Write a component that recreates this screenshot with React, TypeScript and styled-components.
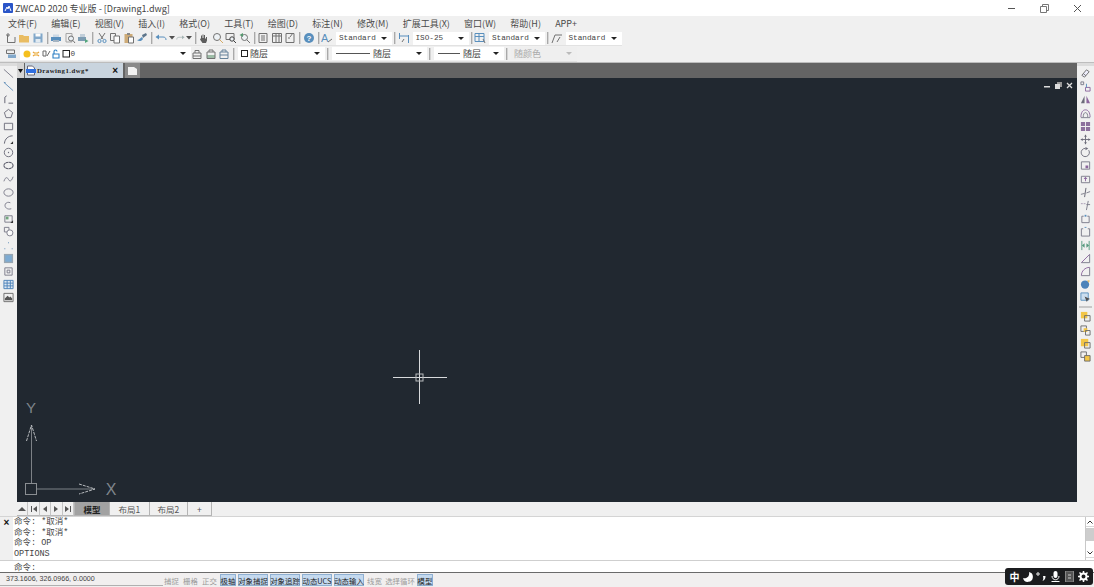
import React from 'react';
import styled, { createGlobalStyle } from 'styled-components';

const UI_FONT = `"Noto Sans CJK SC", "Liberation Sans", sans-serif`;
const MONO_FONT = `"Liberation Mono", "Noto Sans CJK SC", monospace`;

const GlobalStyle = createGlobalStyle`
  html, body {
    margin: 0;
    padding: 0;
    background: #f0f0f0;
  }
  * {
    box-sizing: border-box;
  }
`;

const Page = styled.div`
  width: 1094px;
  height: 587px;
  display: flex;
  flex-direction: column;
  overflow: hidden;
  position: relative;
  background: #f0f0f0;
  font-family: ${UI_FONT};
  color: #333;
`;

/* title bar */
const TitleBar = styled.div`
  height: 16px;
  flex: none;
  background: #fff;
  display: flex;
  align-items: center;
  padding-left: 3px;
`;

const TitleText = styled.span`
  font-size: 9px;
  color: #444;
  margin-left: 2px;
  white-space: nowrap;
`;

const WindowButtons = styled.div`
  margin-left: auto;
  display: flex;
  align-items: center;
  padding-right: 12px;
  gap: 24px;
`;

/* menu */
const MenuBar = styled.div`
  height: 15px;
  flex: none;
  display: flex;
  align-items: center;
  gap: 14.2px;
  padding-left: 8px;
`;

const MenuItem = styled.span`
  font-size: 9px;
  color: #4a4a4a;
  white-space: nowrap;
`;

/* toolbars */
const ToolRow = styled.div<{ $height: number }>`
  height: ${p => p.$height}px;
  flex: none;
  display: flex;
  align-items: center;
  width: fit-content;
  padding-left: 4px;
  border-bottom: 1px solid #e2e2e2;
`;

const Cell = styled.span<{ $w?: number }>`
  width: ${p => p.$w ?? 13.5}px;
  height: 13px;
  flex: none;
  display: inline-flex;
  align-items: center;
  justify-content: center;
  opacity: 0.85;
`;

const Sep = styled.span`
  width: 2px;
  height: 12px;
  flex: none;
  margin: 0 1px 0 2px;
  background: #a9a9a9;
  border-right: 1px solid #d5d5d5;
`;

const Combo = styled.div<{ $w: number; $off?: boolean }>`
  width: ${p => p.$w}px;
  height: 13px;
  flex: none;
  margin-left: 2px;
  background: ${p => (p.$off ? '#efefef' : '#fff')};
  color: ${p => (p.$off ? '#aaa' : '#444')};
  display: flex;
  align-items: center;
  padding: 0 5px 0 3px;
  font-size: 9px;
  white-space: nowrap;
`;

const ComboMono = styled.span`
  font-family: ${MONO_FONT};
  font-size: 7.7px;
  color: #444;
`;

const Caret = styled.span<{ $off?: boolean }>`
  margin-left: auto;
  width: 0;
  height: 0;
  border-left: 3px solid transparent;
  border-right: 3px solid transparent;
  border-top: 3px solid ${p => (p.$off ? '#bbb' : '#222')};
`;

const LineSample = styled.span<{ $w: number }>`
  width: ${p => p.$w}px;
  height: 1px;
  background: #555;
  margin: 0 3px 0 1px;
`;

const ColorSquare = styled.span`
  width: 7px;
  height: 7px;
  border: 1px solid #222;
  margin: 0 2px 0 0;
`;

/* work area */
const Workspace = styled.div`
  flex: 1;
  min-height: 0;
  display: grid;
  grid-template-columns: 17px minmax(0, 1fr) 17px;
  grid-template-rows: minmax(0, 1fr);
  border-top: 1px solid #bdbdbd;
`;

const SideBar = styled.div`
  display: flex;
  flex-direction: column;
  align-items: center;
  padding-top: 1px;
  border-top: 3px solid #dcdcdc;
  background: #f0f0f0;
`;

const SideCell = styled.span`
  height: 13.2px;
  width: 14px;
  flex: none;
  display: flex;
  align-items: center;
  justify-content: center;
  opacity: 0.85;
`;

const SideDivider = styled.span`
  width: 13px;
  height: 2px;
  flex: none;
  margin: 2px 0 2px;
  background: #c8c8c8;
`;

const Center = styled.div`
  display: flex;
  flex-direction: column;
  min-width: 0;
  min-height: 0;
`;

const DocStrip = styled.div`
  height: 15px;
  flex: none;
  background: #646464;
  display: flex;
  align-items: stretch;
`;

const DocMenu = styled.span`
  width: 7px;
  background: #d4d4d4;
  display: flex;
  align-items: center;
  justify-content: center;
`;

const DocTab = styled.div`
  width: 98px;
  margin-left: 1px;
  background: #c9d4de;
  display: flex;
  align-items: center;
  padding: 0 5px 0 1px;
`;

const DocName = styled.span`
  font-family: "Liberation Serif", serif;
  font-weight: 700;
  font-size: 6.8px;
  letter-spacing: 0.45px;
  color: #222;
  margin-left: 1px;
`;

const DocClose = styled.span`
  margin-left: auto;
  font-family: "Liberation Sans", sans-serif;
  font-weight: 700;
  font-size: 10px;
  line-height: 1;
  color: #111;
`;

const NewTab = styled.span`
  width: 15px;
  margin-left: 2px;
  background: #8a8a8a;
  display: flex;
  align-items: center;
  justify-content: center;
`;

const Canvas = styled.div`
  flex: 1;
  min-height: 0;
  background: #212830;
  position: relative;
`;

const ViewControls = styled.div`
  position: absolute;
  top: 4px;
  right: 4px;
  display: flex;
  gap: 4px;
  align-items: center;
`;

const Crosshair = styled.svg`
  position: absolute;
  left: 375px;
  top: 271px;
`;

const UcsIcon = styled.svg`
  position: absolute;
  left: 0;
  bottom: 0;
`;

const LayoutTabs = styled.div`
  height: 14px;
  flex: none;
  background: #f0f0f0;
  display: flex;
  align-items: stretch;
`;

const NavButton = styled.span`
  width: 11.4px;
  flex: none;
  display: flex;
  align-items: center;
  justify-content: center;
  border-right: 1px solid #c4c4c4;
  border-bottom: 1px solid #b8b8b8;
`;

const LayoutTab = styled.span<{ $w: number; $active?: boolean }>`
  width: ${p => p.$w}px;
  flex: none;
  display: flex;
  align-items: center;
  justify-content: center;
  font-size: 8.5px;
  font-weight: ${p => (p.$active ? 700 : 400)};
  color: ${p => (p.$active ? '#222' : '#555')};
  background: ${p => (p.$active ? '#a2a2a2' : '#f0f0f0')};
  border-right: 1px solid #b4b4b4;
  border-bottom: 1px solid #b4b4b4;
`;

/* command window */
const CommandArea = styled.div`
  flex: none;
  display: flex;
  flex-direction: column;
  border-top: 1px solid #d4d4d4;
`;

const History = styled.div`
  height: 43px;
  display: flex;
`;

const CommandGrip = styled.div`
  width: 13px;
  flex: none;
  background: #f0f0f0;
  display: flex;
  justify-content: center;
  font-family: "Liberation Sans", sans-serif;
  font-size: 10px;
  font-weight: 700;
  line-height: 11px;
  color: #111;
`;

const HistoryText = styled.div`
  flex: 1;
  background: #fff;
  padding: 0 0 0 1px;
  overflow: hidden;
`;

const CommandLine = styled.div`
  height: 10.5px;
  line-height: 10.5px;
  font-family: ${MONO_FONT};
  font-size: 8.5px;
  color: #444;
  white-space: nowrap;
`;

const Scrollbar = styled.div`
  width: 9px;
  flex: none;
  display: flex;
  flex-direction: column;
  background: #fff;
  border-left: 1px solid #c8c8c8;
`;

const ScrollArrow = styled.span`
  height: 10px;
  flex: none;
  background: #fff;
  display: flex;
  align-items: center;
  justify-content: center;
  border-bottom: 1px solid #d8d8d8;
`;

const ScrollThumb = styled.span`
  height: 13px;
  flex: none;
  margin: 1px 0 7px;
  background: #cdcdcd;
`;

const InputRow = styled.div`
  height: 13px;
  background: #fff;
  padding-left: 14px;
  display: flex;
  align-items: center;
  border-top: 1px solid #cfcfcf;
  border-bottom: 1px solid #6a6a6a;
  font-family: ${MONO_FONT};
  font-size: 8.5px;
  color: #444;
`;

/* status bar */
const StatusBar = styled.div`
  height: 14px;
  flex: none;
  display: flex;
  align-items: center;
  background: #f1efef;
`;

const Coords = styled.div`
  width: 163px;
  height: 12px;
  padding-left: 6px;
  font-family: "Liberation Sans", sans-serif;
  font-size: 7.1px;
  line-height: 11px;
  color: #444;
  border-bottom: 1px solid #b0b0b0;
`;

const Toggle = styled.span<{ $w: number; $on?: boolean; $gap?: number }>`
  width: ${p => p.$w}px;
  height: 12px;
  flex: none;
  margin-right: ${p => p.$gap ?? 2}px;
  display: flex;
  align-items: center;
  justify-content: center;
  font-size: 7.4px;
  white-space: nowrap;
  color: ${p => (p.$on ? '#222' : '#9a9a9a')};
  background: ${p => (p.$on ? '#c4d9ef' : 'transparent')};
  border: 1px solid ${p => (p.$on ? '#8fb0d2' : 'transparent')};
`;

/* input method floating bar */
const ImeBar = styled.div`
  position: absolute;
  right: 1px;
  bottom: 2px;
  width: 88px;
  height: 17px;
  background: #1b1c1e;
  border-radius: 3px;
  display: flex;
  align-items: center;
  justify-content: space-around;
  padding: 0 3px;
  color: #fff;
  font-size: 10px;
  font-weight: 700;
`;

const stroke = (d: string, c = '#555') => <path d={d} fill="none" stroke={c} strokeWidth="1" />;
const fill = (d: string, c: string) => <path d={d} fill={c} />;

const Icon: React.FC<{ size?: number; children: React.ReactNode }> = ({ size = 12, children }) => (
  <svg width={size} height={size} viewBox="0 0 12 12">
    {children}
  </svg>
);

const BLUE = '#3f7fb5';
const GREY = '#5c5c5c';
const ORANGE = '#e8b34a';
const PURPLE = '#7b4f8f';

const topIcons: Record<string, React.ReactNode> = {
  new: <>{stroke('M2.5 3v7.5h7.5V5', GREY)}{stroke('M1 3h4M3 1v4', GREY)}</>,
  open: <>{fill('M1 3h4l1 1h5v6.5H1z', ORANGE)}</>,
  save: <>{fill('M1.5 1.5h9v9h-9z', '#6f9cc4')}{fill('M3.5 1.5h5v3h-5z', '#fff')}{fill('M3.5 7h5v3.5h-5z', '#dfe9f2')}</>,
  print: <>{fill('M1 5h10v4H1z', BLUE)}{fill('M3 2.5h6V5H3z', '#c6d6e4')}{fill('M3 8h6v2H3z', '#9ab')}</>,
  preview: <>{stroke('M2 1.5h6v8.5H2z', '#999')}<circle cx="7" cy="6.5" r="2.5" fill="#e8eff5" stroke={GREY} />{stroke('M9 8.5l2 2.5', GREY)}</>,
  publish: <>{fill('M1 5h8v4H1z', '#6a8ea8')}{fill('M3 2h5v3H3z', '#b9c9d6')}{fill('M8 7l3.5 2-3.5 2z', '#3a9a6a')}</>,
  cut: <>{stroke('M3 1l4 6M9 1L5 7', GREY)}<circle cx="3.5" cy="9" r="1.6" fill="none" stroke={BLUE} /><circle cx="8.5" cy="9" r="1.6" fill="none" stroke={BLUE} /></>,
  copy: <>{stroke('M1.5 1.5h5v7h-5z', GREY)}<path d="M5 4h5.5v7H5z" fill="#fff" stroke={GREY} /></>,
  paste: <>{fill('M1.5 2h8v9h-8z', '#c9a063')}{fill('M4 1h3v2H4z', '#777')}<path d="M5.5 5h5v6h-5z" fill="#fff" stroke={GREY} /></>,
  match: <>{fill('M6 3l4-2 1 2-4 3z', '#44607a')}{fill('M1 8c2 0 3-2 5-3l1 2c-1 2-4 3-6 1z', BLUE)}</>,
  undo: <>{stroke('M3 5h5c2 0 3 1 3 3', BLUE)}{fill('M0.5 5L4 2.5v5z', BLUE)}</>,
  redo: <>{stroke('M9 5H4C2 5 1 6 1 8', '#9aa')}{fill('M11.5 5L8 2.5v5z', '#9aa')}</>,
  pan: <>{fill('M3 6V3.5h1V6h.5V2.5h1V6H6V3h1v3.5h1V5h1v3.5L8 11H4.5L2 7.5z', '#444')}</>,
  zoom: <><circle cx="5" cy="5" r="3.5" fill="#eef3f7" stroke={GREY} />{stroke('M7.5 7.5l3.5 3.5', '#d1a050')}</>,
  zoomWin: <>{stroke('M1 1.5h8v6H1z', GREY)}<circle cx="7" cy="7" r="2.2" fill="#eef3f7" stroke="#222" />{stroke('M8.5 8.5l2.5 2.5', '#222')}</>,
  zoomPrev: <><circle cx="5.5" cy="5.5" r="3" fill="#eef3f7" stroke={GREY} />{stroke('M8 8l3 3', GREY)}{fill('M0.5 3L4 1v4z', '#3a8a5a')}</>,
  props: <>{stroke('M2 1.5h8v9H2z', GREY)}{stroke('M4 4h4M4 6h4M4 8h4', GREY)}</>,
  design: <>{stroke('M1.5 1.5h9v9h-9zM1.5 4h9M5 1.5v9M8 1.5v9', GREY)}</>,
  tool: <>{stroke('M2 1.5h8v9H2z', GREY)}{stroke('M4 6h2M9 1l-3 4', GREY)}</>,
  help: <><circle cx="6" cy="6" r="5" fill="#3f7fb5" /><text x="6" y="9" fontSize="8" fontWeight="700" textAnchor="middle" fill="#fff" fontFamily="Liberation Sans">?</text></>,
  textStyle: <><text x="0" y="10" fontSize="11" fill={BLUE} fontFamily="Liberation Sans">A</text>{stroke('M7 10l4-3', GREY)}</>,
  dimStyle: <>{stroke('M1.5 1v6M10.5 3v8M1.5 4h9', BLUE)}{stroke('M4 10l2-3', GREY)}</>,
  tableStyle: <>{stroke('M1 1.5h9v8H1zM1 4.5h9M5 1.5v8', BLUE)}{stroke('M9 7l2 4', GREY)}</>,
  leader: <>{stroke('M1 11l3-8h7', GREY)}{stroke('M9 5l-3 5', GREY)}</>,
  layer: <>{stroke('M1.5 2h8v3.5h-8z', GREY)}{fill('M3 6.5h8V10H3z', '#6f9cc4')}</>,
  layerA: <>{stroke('M2 5h8v5.5H2z', GREY)}{stroke('M4 5V2.5h4V5', GREY)}{stroke('M2 8h8', GREY)}</>,
  layerB: <>{fill('M2 7h8v3.5H2z', '#8fb49a')}{stroke('M2 4h8v6.5H2zM4 4V2h4v2', GREY)}</>,
  layerC: <>{stroke('M2 4h8v6.5H2zM2 7h8M4 4V2h4v2', '#50708c')}</>,
};

const leftIcons: React.ReactNode[] = [
  stroke('M1 1.5l10 9', '#667'),
  stroke('M1 1.5l10 9M1 1.5l2 .5', '#4a7fb0'),
  stroke('M2 10V3.5L4 2M6 10h5', '#445'),
  stroke('M6 1.5l4.5 3.5-1.8 5.5H3.3L1.5 5z', '#556'),
  stroke('M1.5 2.5h9v7h-9z', '#556'),
  <>{stroke('M1.5 10.5C2 5 6 2 10.5 2', '#445')}{fill('M8 11l3-3v3z', '#111')}</>,
  <><circle cx="6" cy="6" r="4.6" fill="none" stroke="#556" /><circle cx="6" cy="6" r=".7" fill="#556" /></>,
  <ellipse cx="6" cy="6" rx="5" ry="3.6" fill="none" stroke="#445" strokeWidth="1.2" strokeDasharray="3 .4" />,
  stroke('M1 8c2-6 4-4 5-2s3 3 5-3', '#667'),
  <ellipse cx="6" cy="6" rx="5" ry="4" fill="none" stroke="#667" />,
  stroke('M9 9.5C5 11 1 8 2.5 4.5 3.5 2.5 6 2 8 3', '#667'),
  <>{stroke('M2 3h8v7H2z', '#667')}{fill('M3 4h3v3H3z', '#5c9a6a')}{fill('M8 11l3-3v3z', '#111')}</>,
  <>{stroke('M1.5 1.5h5v5h-5z', '#667')}<circle cx="7.5" cy="7.5" r="3.3" fill="#fff" stroke="#667" /></>,
  <>{fill('M5.5 2.5h1v1h-1z', '#4a7fb0')}{fill('M1.5 9h1v1h-1z', '#4a7fb0')}{fill('M9.5 9h1v1h-1z', '#4a7fb0')}</>,
  <>{fill('M1 1h10v10H1z', '#8a9aa8')}{fill('M2.5 2.5h7v7h-7z', '#6aa0cf')}</>,
  <>{stroke('M2 2h8v8H2z', '#667')}{stroke('M4.5 4.5h3v3h-3z', '#667')}</>,
  <>{fill('M1 1.5h10v9H1z', '#dbe7f2')}{stroke('M1 1.5h10v9H1zM1 4.5h10M1 7.5h10M4.5 1.5v9M8 1.5v9', '#2f6fb0')}</>,
  <>{stroke('M1 1.5h10v9H1z', '#555')}{fill('M2 7l3-3 2 2 1-1 2 2v2H2z', '#3a3a3a')}</>,
];

const rightIcons: React.ReactNode[] = [
  <>{fill('M2 8l5-6 3 2-5 6z', '#eef')}{stroke('M2 8l5-6 3 2-5 6zM3.5 6l3 2.5', '#555')}</>,
  <>{stroke('M1 1h3v3H1z', '#667')}{stroke('M6 7h5v4H6z', PURPLE)}{fill('M6.5 3h1v4h-1z', BLUE)}</>,
  <>{fill('M5 2v8H1z', '#556')}{fill('M7 2v8h4z', PURPLE)}</>,
  <>{stroke('M1 10c0-5 2-8 5-8s5 3 5 8', PURPLE)}{stroke('M3.5 10c0-3 1-5 2.5-5s2.5 2 2.5 5', '#667')}{stroke('M1 10.5h10', '#667')}</>,
  <>{fill('M1 1h4.5v4.5H1zM6.5 1H11v4.5H6.5zM1 6.5h4.5V11H1zM6.5 6.5H11V11H6.5z', '#7b5a8f')}</>,
  <>{stroke('M6 1v10M1 6h10', '#556')}{fill('M6 .5L7.5 3h-3zM6 11.500L4.500 9h3zM.5 6L3 4.500v3zM11.500 6L9 7.500v-3z', '#556')}</>,
  <>{stroke('M9.500 3.500A4.500 4.500 0 1 1 6 1.500', '#556')}{fill('M6 0l3 1.500L6 3.500z', '#556')}</>,
  <>{stroke('M1.500 2h9v8h-9z', '#667')}{fill('M6 6h3v3H6z', PURPLE)}</>,
  <>{stroke('M1.500 2.500h9v7h-9z', '#667')}{fill('M5.500 4h1v4h-1zM4 5.500L6 3l2 2.500z', PURPLE)}</>,
  <>{stroke('M1 8l4-1M7 6.500L11 5', '#667')}{stroke('M6.500 1l-1.500 10', '#445')}</>,
  <>{stroke('M1 4h2M4 4h2', '#9a8aa8')}{stroke('M7 5h4M9 1L7 11', '#667')}</>,
  <>{stroke('M2 3.500v7h8v-7h-2M4 3.500H2', '#667')}{fill('M5 2h2v2H5z', BLUE)}</>,
  <>{stroke('M1.500 3v8h9V3', '#667')}{stroke('M1.500 3h2M8.500 3h2', '#667')}{fill('M5 1h2v1H5z', BLUE)}</>,
  <>{stroke('M2 1v10M10 1v10', '#3a8a6a')}{fill('M2 6l3-2.500v5zM10 6L7 3.500v5z', '#3a8a6a')}</>,
  <>{stroke('M1.500 10.500h9V1.500', '#667')}{stroke('M1.500 10.500l9-9', PURPLE)}</>,
  <>{stroke('M1.500 10.500h9V1.500', '#667')}{stroke('M1.500 10.500c0-5 4-9 9-9', PURPLE)}</>,
  <>{fill('M1 6a4.500 4.500 0 1 0 9 0 4.500 4.500 0 1 0-9 0', '#2f6fb0')}{fill('M8 1l3 1-2 2z', ORANGE)}</>,
  <>{fill('M1 1h8v8H1z', '#c6dcef')}{stroke('M1 1h8v8H1z', '#3f7fb5')}{fill('M5 5l6 2.500-2.500 1L7.500 11z', '#333')}</>,
];

const stackIcons: React.ReactNode[] = [
  <>{fill('M1 1h7v7H1z', '#f4bf2a')}{stroke('M5 5h6v6H5z', '#555')}</>,
  <>{stroke('M1 1h6v6H1z', '#555')}{fill('M4 3.500h4v4H4z', '#f4bf2a')}{stroke('M6 6h5v5H6z', '#555')}</>,
  <>{fill('M1 1h8v8H1z', '#f4bf2a')}{stroke('M5 5h6v6H5z', '#555')}</>,
  <>{stroke('M1 1h6v6H1z', '#555')}{fill('M5 5h6v6H5z', '#f4bf2a')}{stroke('M5 5h6v6H5z', '#555')}</>,
];

const Tool: React.FC<{ name: string; w?: number }> = ({ name, w }) => (
  <Cell $w={w}>
    <Icon>{topIcons[name]}</Icon>
  </Cell>
);

const SmallCaret: React.FC = () => (
  <Cell $w={8}>
    <svg width="6" height="4" viewBox="0 0 6 4">
      <path d="M0 0h6L3 3.500z" fill="#333" />
    </svg>
  </Cell>
);

const Nav: React.FC<{ d: string }> = ({ d }) => (
  <NavButton>
    <svg width="8" height="8" viewBox="0 0 8 8">
      <path d={d} fill="#555" />
    </svg>
  </NavButton>
);

const menus = ['文件(F)', '编辑(E)', '视图(V)', '插入(I)', '格式(O)', '工具(T)', '绘图(D)', '标注(N)', '修改(M)', '扩展工具(X)', '窗口(W)', '帮助(H)', 'APP+'];

export default function App() {
  return (
    <Page>
      <GlobalStyle />
      <TitleBar>
        <svg width="10" height="10" viewBox="0 0 10 10">
          <rect width="10" height="10" rx="1" fill="#2a55c8" />
          <path d="M2 8l2-4 1 2 1-3 2 5" fill="none" stroke="#fff" strokeWidth="1" />
        </svg>
        <TitleText>ZWCAD 2020 专业版 - [Drawing1.dwg]</TitleText>
        <WindowButtons>
          <svg width="9" height="9" viewBox="0 0 9 9"><path d="M1 4.500h7" stroke="#555" /></svg>
          <svg width="9" height="9" viewBox="0 0 9 9"><path d="M.5 2.500h6v6h-6zM2.500 2.500v-2h6v6h-2" fill="none" stroke="#777" /></svg>
          <svg width="9" height="9" viewBox="0 0 9 9"><path d="M1 1l7 7M8 1L1 8" stroke="#555" /></svg>
        </WindowButtons>
      </TitleBar>

      <MenuBar>
        {menus.map(m => (
          <MenuItem key={m}>{m}</MenuItem>
        ))}
      </MenuBar>

      <ToolRow $height={15}>
        <Tool name="new" />
        <Tool name="open" />
        <Tool name="save" />
        <Sep />
        <Tool name="print" />
        <Tool name="preview" />
        <Tool name="publish" />
        <Sep />
        <Tool name="cut" />
        <Tool name="copy" />
        <Tool name="paste" />
        <Tool name="match" />
        <Sep />
        <Tool name="undo" />
        <SmallCaret />
        <Tool name="redo" w={9} />
        <SmallCaret />
        <Sep />
        <Tool name="pan" />
        <Tool name="zoom" />
        <Tool name="zoomWin" />
        <Tool name="zoomPrev" />
        <Sep />
        <Tool name="props" />
        <Tool name="design" />
        <Tool name="tool" />
        <Sep />
        <Tool name="help" />
        <Sep />
        <Tool name="textStyle" />
        <Combo $w={56}><ComboMono>Standard</ComboMono><Caret /></Combo>
        <Sep />
        <Tool name="dimStyle" />
        <Combo $w={56}><ComboMono>ISO-25</ComboMono><Caret /></Combo>
        <Sep />
        <Tool name="tableStyle" />
        <Combo $w={56}><ComboMono>Standard</ComboMono><Caret /></Combo>
        <Sep />
        <Tool name="leader" />
        <Combo $w={56}><ComboMono>Standard</ComboMono><Caret /></Combo>
      </ToolRow>

      <ToolRow $height={16}>
        <Tool name="layer" />
        <Combo $w={171}>
          <svg width="48" height="10" viewBox="0 0 48 10">
            <circle cx="4" cy="5" r="3.500" fill="#f5c01e" />
            <path d="M10 3l6 4M16 3l-6 4" stroke="#e8a33c" strokeWidth="1.500" />
            <circle cx="13" cy="5" r="2" fill="#f3cf8a" />
            <path d="M20 2h3v5h-3zM24 7l3-5" fill="none" stroke="#6a6a6a" />
            <path d="M31 4.500V2.500a1.500 1.500 0 0 1 3 0M30 5h6v4h-6z" fill="none" stroke="#2b7fc4" strokeWidth="1.100" />
            <rect x="40" y="1.500" width="6.500" height="6.500" fill="#fff" stroke="#222" />
          </svg>
          <ComboMono>0</ComboMono>
          <Caret />
        </Combo>
        <Tool name="layerA" />
        <Tool name="layerB" />
        <Tool name="layerC" />
        <Sep />
        <Combo $w={87}><ColorSquare />随层<Caret /></Combo>
        <Sep />
        <Combo $w={95}><LineSample $w={34} />随层<Caret /></Combo>
        <Sep />
        <Combo $w={70}><LineSample $w={22} />随层<Caret /></Combo>
        <Sep />
        <Combo $w={66} $off>随颜色<Caret $off /></Combo>
      </ToolRow>

      <Workspace>
        <SideBar>
          {leftIcons.map((icon, i) => (
            <SideCell key={i}><Icon size={11}>{icon}</Icon></SideCell>
          ))}
        </SideBar>

        <Center>
          <DocStrip>
            <DocMenu>
              <svg width="5" height="4" viewBox="0 0 5 4"><path d="M0 0h5L2.500 4z" fill="#111" /></svg>
            </DocMenu>
            <DocTab>
              <svg width="10" height="11" viewBox="0 0 10 11">
                <path d="M1.500 1h5l2 2v7h-7z" fill="#fff" stroke="#667" />
                <rect y="4" width="10" height="4" fill="#2f6fe0" />
              </svg>
              <DocName>Drawing1.dwg*</DocName>
              <DocClose>×</DocClose>
            </DocTab>
            <NewTab>
              <svg width="9" height="8" viewBox="0 0 9 8"><path d="M0 0h6l3 2v6H0z" fill="#f2f2f2" /></svg>
            </NewTab>
          </DocStrip>

          <Canvas>
            <ViewControls>
              <svg width="7" height="7" viewBox="0 0 7 7"><rect y="4" width="6" height="1.500" fill="#ddd" /></svg>
              <svg width="7" height="7" viewBox="0 0 7 7"><path d="M2 0h5v5H2z" fill="#999" /><path d="M0 2h5v5H0z" fill="#ddd" /></svg>
              <svg width="7" height="7" viewBox="0 0 7 7"><path d="M1 1l5 5M6 1L1 6" stroke="#ddd" strokeWidth="1.300" /></svg>
            </ViewControls>

            <Crosshair width="56" height="56" viewBox="0 0 56 56">
              <path d="M1 28.500h54M27.500 1v54" stroke="#d8dadc" strokeWidth="1" />
              <rect x="24" y="25" width="7" height="7" fill="none" stroke="#b8babc" />
            </Crosshair>

            <UcsIcon width="110" height="105" viewBox="0 0 110 105">
              <text x="14" y="16" fontSize="15" fill="#7f858b" textAnchor="middle" fontFamily="Liberation Sans" fontWeight="400">Y</text>
              <path d="M14.500 28v58M20 92h58" stroke="#7d8186" strokeWidth="1" />
              <path d="M9.500 44l5-16 5 16M62 87l16 5-16 5" fill="none" stroke="#b8bbbe" strokeWidth="1" strokeDasharray="3 1" />
              <rect x="8.500" y="86.500" width="11" height="11" fill="none" stroke="#8a8e92" />
              <text x="94" y="98" fontSize="16" fill="#7f858b" textAnchor="middle" fontFamily="Liberation Sans" fontWeight="400">X</text>
            </UcsIcon>
          </Canvas>

          <LayoutTabs>
            <Nav d="M0 6l4-4 4 4z" />
            <Nav d="M1 1h1v6H1zM7 1v6L3 4z" />
            <Nav d="M6 1v6L2 4z" />
            <Nav d="M2 1v6l4-3z" />
            <Nav d="M1 1v6l4-3zM6 1h1v6H6z" />
            <LayoutTab $w={1}></LayoutTab>
            <LayoutTab $w={35} $active>模型</LayoutTab>
            <LayoutTab $w={40}>布局1</LayoutTab>
            <LayoutTab $w={38}>布局2</LayoutTab>
            <LayoutTab $w={24}>+</LayoutTab>
          </LayoutTabs>
        </Center>

        <SideBar>
          {rightIcons.map((icon, i) => (
            <SideCell key={i}><Icon size={11}>{icon}</Icon></SideCell>
          ))}
          <SideDivider />
          {stackIcons.map((icon, i) => (
            <SideCell key={i}><Icon size={11}>{icon}</Icon></SideCell>
          ))}
        </SideBar>
      </Workspace>

      <CommandArea>
        <History>
          <CommandGrip>×</CommandGrip>
          <HistoryText>
            <CommandLine>命令: *取消*</CommandLine>
            <CommandLine>命令: *取消*</CommandLine>
            <CommandLine>命令: OP</CommandLine>
            <CommandLine>OPTIONS</CommandLine>
          </HistoryText>
          <Scrollbar>
            <ScrollArrow>
              <svg width="6" height="4" viewBox="0 0 6 4"><path d="M.5 3.500L3 1l2.500 2.500" fill="none" stroke="#333" /></svg>
            </ScrollArrow>
            <ScrollThumb />
            <ScrollArrow>
              <svg width="6" height="4" viewBox="0 0 6 4"><path d="M.5 .5L3 3 5.500 .5" fill="none" stroke="#333" /></svg>
            </ScrollArrow>
          </Scrollbar>
        </History>
        <InputRow>命令:</InputRow>
      </CommandArea>

      <StatusBar>
        <Coords>373.1606, 326.0966, 0.0000</Coords>
        <Toggle $w={17}>捕捉</Toggle>
        <Toggle $w={17}>栅格</Toggle>
        <Toggle $w={17}>正交</Toggle>
        <Toggle $w={16} $on>极轴</Toggle>
        <Toggle $w={30} $on>对象捕捉</Toggle>
        <Toggle $w={30} $on>对象追踪</Toggle>
        <Toggle $w={30} $on>动态UCS</Toggle>
        <Toggle $w={30} $on>动态输入</Toggle>
        <Toggle $w={17}>线宽</Toggle>
        <Toggle $w={30}>选择循环</Toggle>
        <Toggle $w={16} $on>模型</Toggle>
      </StatusBar>

      <ImeBar>
        <span>中</span>
        <svg width="11" height="11" viewBox="0 0 11 11"><path d="M7 1a5 5 0 1 1-6 6c3 1 7-1 6-6z" fill="#fff" /></svg>
        <svg width="11" height="11" viewBox="0 0 11 11"><circle cx="2" cy="3" r="1.200" fill="none" stroke="#fff" /><path d="M7 5h2.500c0 3-1 4-3 5 1-1.500 1-3 .5-5z" fill="#fff" /></svg>
        <svg width="11" height="11" viewBox="0 0 11 11"><rect x="3.500" y="0" width="4" height="7" rx="2" fill="#fff" /><path d="M2 5c0 5 7 5 7 0M1.500 10.500h8" fill="none" stroke="#fff" /></svg>
        <svg width="11" height="11" viewBox="0 0 11 11"><rect x="1.500" y="0" width="8" height="11" fill="#555" stroke="#888" /><path d="M4 4h3M4 7h3" stroke="#ccc" /></svg>
        <svg width="11" height="11" viewBox="0 0 11 11"><circle cx="5.500" cy="5.500" r="3" fill="none" stroke="#fff" strokeWidth="2" /><path d="M5.500 0v2M5.500 9v2M0 5.500h2M9 5.500h2M1.500 1.500l1.500 1.500M8 8l1.500 1.500M9.500 1.500L8 3M3 8L1.500 9.500" stroke="#fff" strokeWidth="1.500" /></svg>
      </ImeBar>
    </Page>
  );
}
